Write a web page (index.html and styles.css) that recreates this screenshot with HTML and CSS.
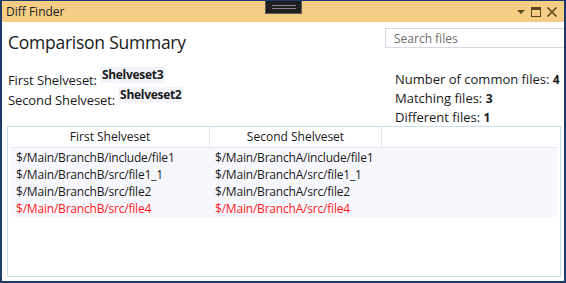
FILE: index.html
```html
<!DOCTYPE html>
<html>
<head>
<meta charset="utf-8">
<link rel="stylesheet" href="styles.css">
</head>
<body>
<div class="window">
  <div class="titlebar">
    <span class="title">Diff Finder</span>
    <div class="handle"><span></span><span></span></div>
    <div class="controls">
      <svg width="10" height="10" viewBox="0 0 10 10"><path d="M1 3 L9 3 L5 7 Z" fill="#5c4a1e"/></svg>
      <svg width="12" height="12" viewBox="0 0 12 12"><rect x="1.5" y="1.5" width="9" height="9" fill="none" stroke="#5c4a1e" stroke-width="1"/><rect x="1" y="1" width="10" height="3" fill="#5c4a1e"/></svg>
      <svg width="12" height="12" viewBox="0 0 12 12"><path d="M1.5 1.5 L10.5 10.5 M10.5 1.5 L1.5 10.5" stroke="#5c4a1e" stroke-width="1.6"/></svg>
    </div>
  </div>
  <div class="content">
    <div class="header">
      <h1 class="heading">Comparison Summary</h1>
      <div class="search">Search files</div>
    </div>
    <div class="info">
      <div class="shelves">
        <div class="srow"><span class="label">First Shelveset:</span><span class="badge">Shelveset3</span></div>
        <div class="srow"><span class="label">Second Shelveset:</span><span class="badge">Shelveset2</span></div>
      </div>
      <div class="stats">
        <div class="stat">Number of common files: <b>4</b></div>
        <div class="stat">Matching files: <b>3</b></div>
        <div class="stat">Different files: <b>1</b></div>
      </div>
    </div>
    <div class="grid">
      <div class="ghead">
        <div class="c1">First Shelveset</div>
        <div class="c2">Second Shelveset</div>
        <div class="c3"></div>
      </div>
      <div class="gbody">
        <div class="grow"><div class="c1">$/Main/BranchB/include/file1</div><div class="c2">$/Main/BranchA/include/file1</div></div>
        <div class="grow"><div class="c1">$/Main/BranchB/src/file1_1</div><div class="c2">$/Main/BranchA/src/file1_1</div></div>
        <div class="grow"><div class="c1">$/Main/BranchB/src/file2</div><div class="c2">$/Main/BranchA/src/file2</div></div>
        <div class="grow diff"><div class="c1">$/Main/BranchB/src/file4</div><div class="c2">$/Main/BranchA/src/file4</div></div>
      </div>
    </div>
  </div>
</div>
</body>
</html>
```
FILE: styles.css
```css
* { box-sizing: border-box; }
html, body { margin: 0; padding: 0; background: #fff; }
body { font-family: "Open Sans", "Noto Sans", sans-serif; color: #1a1a1a; }
.window {
  width: 566px; height: 283px;
  border: 2px solid #1c3a6b; border-top: 1px solid #1c3a6b;
  display: flex; flex-direction: column; overflow: hidden;
}
.titlebar {
  position: relative;
  height: 21px; flex: none;
  background: #f5cd85;
  display: flex; align-items: center;
  padding: 0 6px 0 4px;
}
.title { font-size: 12px; color: #1e1e1e; }
.handle {
  position: absolute; left: 263px; top: -1px;
  width: 37px; height: 14px;
  background: #1f1f1f; border: 1px solid #5d5d5d;
  display: flex; flex-direction: column; justify-content: center; align-items: center; gap: 2px;
}
.handle span { display: block; width: 24px; height: 1px; background: #8a8a8a; }
.controls { margin-left: auto; display: flex; align-items: center; gap: 4px; }
.content { flex: 1; display: flex; flex-direction: column; padding: 0 3px 4px 5px; }
.header { display: flex; justify-content: space-between; margin-top: 6px; height: 20px; }
.heading { margin: 0 0 0 1px; font-weight: normal; font-size: 17.5px; line-height: 20px; padding-top: 4px; color: #1a1a1a; letter-spacing: -0.25px; }
.search {
  width: 182px; height: 20px; margin-right: -6px;
  border: 1px solid #d6d9e3; border-right: none;
  font-size: 12px; color: #6d6d6d; padding: 1px 0 0 8px; line-height: 17px;
}
.info { display: flex; justify-content: space-between; margin-top: 19px; height: 58px; }
.shelves { padding-left: 1px; }
.srow { display: flex; align-items: flex-start; height: 20px; }
.label { font-size: 13px; line-height: 16px; padding-top: 5px; letter-spacing: -0.1px; }
.badge { font-size: 12px; font-weight: bold; background: #f3f4fa; line-height: 16px; padding: 0 2px; margin-left: 3px; letter-spacing: -0.3px; }
.stats { width: 166px; padding-top: 3px; }
.stat { font-size: 13px; line-height: 19px; letter-spacing: 0; white-space: nowrap; }
.stat b { font-size: 12px; }
.grid { flex: 1; border: 1px solid #c9dde6; margin-top: 1px; padding: 0 3px; }
.ghead { display: flex; height: 21px; border-bottom: 1px solid #e3e6ec; }
.ghead div { font-size: 12px; line-height: 20px; text-align: center; border-right: 1px solid #e3e6ec; }
.ghead .c3 { flex: 1; border-right: none; }
.c1 { width: 199px; flex: none; }
.c2 { width: 172px; flex: none; }
.gbody { background: #f7f8fd; padding-top: 1px; }
.grow { display: flex; height: 17px; }
.grow div { font-size: 12px; line-height: 17px; padding-left: 5px; letter-spacing: -0.2px; }
.grow.diff { color: #ff1a1a; }
```
